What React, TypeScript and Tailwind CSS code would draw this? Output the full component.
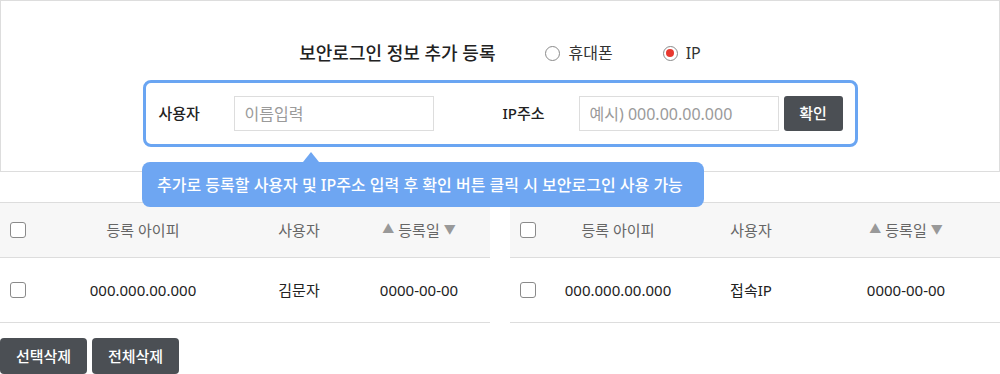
import { useState } from "react";

const rows = {
  left: { ip: "000.000.00.000", user: "김문자", date: "0000-00-00" },
  right: { ip: "000.000.00.000", user: "접속IP", date: "0000-00-00" },
};

function Check() {
  return <span className="block w-4 h-4 rounded-[3px] border border-[#8a8a8a] bg-white" />;
}

function Radio({ checked, label }: { checked: boolean; label: string }) {
  return (
    <label className="flex items-center gap-[8px] text-[16px] text-[#333]">
      <span className="w-[15px] h-[15px] rounded-full border border-[#8a8a8a] flex items-center justify-center bg-white">
        {checked && <span className="w-[8px] h-[8px] rounded-full bg-[#e8382f]" />}
      </span>
      {label}
    </label>
  );
}

function DateHead() {
  return (
    <span className="flex items-center gap-1">
      <span className="text-[12px] text-[#999]">▲</span>
      등록일
      <span className="text-[12px] text-[#999]">▼</span>
    </span>
  );
}

export default function App() {
  const [mode] = useState<"phone" | "ip">("ip");

  return (
    <div
      className="w-[1000px] h-[374px] overflow-hidden bg-white text-[#222] relative"
      style={{ fontFamily: '"Noto Sans", "Noto Sans CJK KR", sans-serif' }}
    >
      {/* Register box */}
      <div className="border border-[#dddddd] h-[172px] flex flex-col items-center pt-[38px]">
        <div className="h-[28px] flex items-center">
          <h2 className="text-[18px] font-medium text-[#222] mr-[50px]">보안로그인 정보 추가 등록</h2>
          <div className="mr-[50px]">
            <Radio checked={mode === "phone"} label="휴대폰" />
          </div>
          <Radio checked={mode === "ip"} label="IP" />
        </div>

        <div className="mt-[13px] w-[715px] h-[67px] border-[3px] border-[#6aa5f2] rounded-lg flex items-center pl-[13px]">
          <span className="w-[75px] text-[15px] font-medium">사용자</span>
          <input
            className="w-[200px] h-[35px] border border-[#dddddd] px-[10px] text-[16px] outline-none placeholder:text-[#9a9a9a]"
            placeholder="이름입력"
          />
          <span className="ml-[69px] w-[76px] text-[15px] font-medium">IP주소</span>
          <input
            className="w-[200px] h-[35px] border border-[#dddddd] px-[10px] text-[16px] outline-none placeholder:text-[#9a9a9a]"
            placeholder="예시) 000.00.00.000"
          />
          <button className="ml-[5px] w-[59px] h-[35px] rounded-[3px] bg-[#4b4f54] text-white text-[15px] font-medium">
            확인
          </button>
        </div>
      </div>

      {/* Tooltip */}
      <div className="absolute left-[142px] top-[162px] w-[562px] h-[45px] px-[15px] rounded-lg bg-[#6ea6f2] text-white text-[16px] font-medium flex items-center z-10 whitespace-nowrap">
        <span className="absolute left-[161px] -top-[10px] w-0 h-0 border-l-[8px] border-r-[8px] border-b-[10px] border-l-transparent border-r-transparent border-b-[#6ea6f2]" />
        추가로 등록할 사용자 및 IP주소 입력 후 확인 버튼 클릭 시 보안로그인 사용 가능
      </div>

      {/* Tables */}
      <div className="mt-[30px] flex gap-[20px]">
        <div className="w-[490px] text-[15px]">
          <div className="grid grid-cols-[36px_214px_98px_1fr] h-[56px] items-center bg-[#f7f7f7] border-t border-b border-[#dddddd] text-[#666]">
            <span className="pl-[10px]"><Check /></span>
            <span className="text-center">등록 아이피</span>
            <span className="text-center">사용자</span>
            <span className="flex justify-center"><DateHead /></span>
          </div>
          <div className="grid grid-cols-[36px_214px_98px_1fr] h-[65px] items-center border-b border-[#dddddd]">
            <span className="pl-[10px]"><Check /></span>
            <span className="text-center">{rows.left.ip}</span>
            <span className="text-center">{rows.left.user}</span>
            <span className="text-center">{rows.left.date}</span>
          </div>
        </div>
        <div className="w-[490px] text-[15px]">
          <div className="grid grid-cols-[36px_144px_122px_1fr] h-[56px] items-center bg-[#f7f7f7] border-t border-b border-[#dddddd] text-[#666]">
            <span className="pl-[10px]"><Check /></span>
            <span className="text-center">등록 아이피</span>
            <span className="text-center">사용자</span>
            <span className="flex justify-center"><DateHead /></span>
          </div>
          <div className="grid grid-cols-[36px_144px_122px_1fr] h-[65px] items-center border-b border-[#dddddd]">
            <span className="pl-[10px]"><Check /></span>
            <span className="text-center">{rows.right.ip}</span>
            <span className="text-center">{rows.right.user}</span>
            <span className="text-center">{rows.right.date}</span>
          </div>
        </div>
      </div>

      <div className="mt-[15px] flex gap-[5px]">
        <button className="w-[87px] h-9 rounded-[4px] bg-[#4b4f54] text-white text-[15px] font-medium">선택삭제</button>
        <button className="w-[87px] h-9 rounded-[4px] bg-[#4b4f54] text-white text-[15px] font-medium">전체삭제</button>
      </div>
    </div>
  );
}
